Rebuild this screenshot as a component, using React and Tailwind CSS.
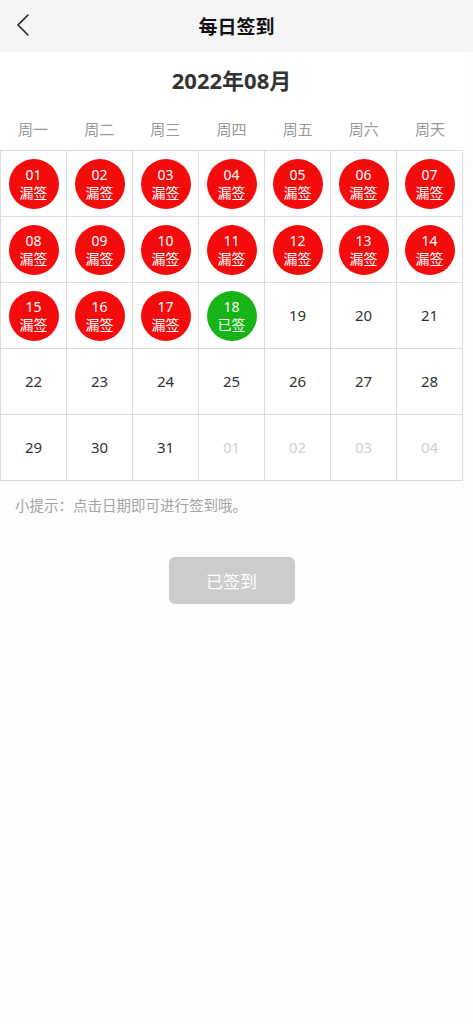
import React from "react";

const FONT = { fontFamily: '"Noto Sans", "Noto Sans CJK SC", sans-serif' };
const CJK = { fontFamily: '"Noto Sans CJK SC", sans-serif' };

const weekdays = ["周一", "周二", "周三", "周四", "周五", "周六", "周天"];

function buildDays() {
  const days = [];
  for (let d = 1; d <= 31; d++) {
    let state = "plain";
    if (d <= 17) state = "missed";
    else if (d === 18) state = "signed";
    days.push({ label: String(d).padStart(2, "0"), state });
  }
  for (let d = 1; d <= 4; d++) {
    days.push({ label: "0" + d, state: "next" });
  }
  return days;
}

function Cell({ day }) {
  return (
    <div className="h-[66px] border-r border-b border-[#dcdcdc] flex items-center justify-center">
      {day.state === "missed" && (
        <div className="w-[50px] h-[50px] rounded-full bg-[#f40b0b] flex flex-col items-center justify-center text-white text-[14px] leading-[18px]">
          <span>{day.label}</span>
          <span>漏签</span>
        </div>
      )}
      {day.state === "signed" && (
        <div className="w-[50px] h-[50px] rounded-full bg-[#16b416] flex flex-col items-center justify-center text-white text-[14px] leading-[18px]">
          <span>{day.label}</span>
          <span>已签</span>
        </div>
      )}
      {day.state === "plain" && (
        <span className="text-[15px] text-[#333]">{day.label}</span>
      )}
      {day.state === "next" && (
        <span className="text-[15px] text-[#cfcfcf]">{day.label}</span>
      )}
    </div>
  );
}

export default function App() {
  const days = buildDays();
  return (
    <div className="min-h-[1024px] w-[473px] bg-[#fdfdfd]" style={FONT}>
      <div className="relative h-[52px] bg-[#f5f5f5] flex items-center justify-center">
        <svg
          className="absolute left-[15px] top-[13px]"
          width="16"
          height="24"
          viewBox="0 0 16 24"
          fill="none"
        >
          <path d="M13 2 L3 12 L13 22" stroke="#222" strokeWidth="1.6" strokeLinecap="round" strokeLinejoin="round" />
        </svg>
        <span className="text-[19px] font-bold text-[#111]" style={CJK}>每日签到</span>
      </div>

      <div className="w-[463px] bg-white">
        <div className="h-[56px] flex items-center justify-center">
          <span className="text-[22px] font-bold text-[#333]">2022年08月</span>
        </div>
        <div className="h-[42px] grid grid-cols-7 items-center">
          {weekdays.map((w) => (
            <div key={w} className="text-center text-[15px] text-[#999]" style={CJK}>
              {w}
            </div>
          ))}
        </div>
        <div className="grid grid-cols-7 border-l border-t border-[#dcdcdc]">
          {days.map((d, i) => (
            <Cell key={i} day={d} />
          ))}
        </div>
      </div>

      <div className="w-[463px]">
        <div className="h-[48px] flex items-center px-[15px] text-[14.5px] text-[#a3a3a3]" style={CJK}>
          小提示：点击日期即可进行签到哦。
        </div>
        <div className="mt-[28px] flex justify-center">
          <div className="w-[126px] h-[47px] rounded-[6px] bg-[#cccccc] flex items-center justify-center text-white text-[17px]" style={CJK}>
            已签到
          </div>
        </div>
      </div>
    </div>
  );
}
